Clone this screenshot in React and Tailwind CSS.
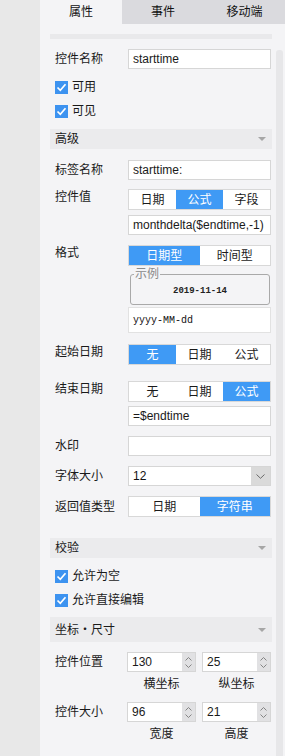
import React from "react";

function Tri() {
  return (
    <svg width="8" height="4" viewBox="0 0 8 4" className="mr-[6px]">
      <polygon points="0,0 8,0 4,4" fill="#a6a6a6" />
    </svg>
  );
}

function Header({ children, tall }) {
  return (
    <div
      className={`flex items-center justify-between pl-[5px] bg-[#ebebed] text-[12px] text-[#1a1a1a] ${
        tall ? "h-[25px]" : "h-[20px]"
      }`}
    >
      <span className="leading-[16px]">{children}</span>
      <Tri />
    </div>
  );
}

function Check({ children }) {
  return (
    <div className="flex items-center h-[24px] pl-[5px]">
      <div className="w-[13px] h-[13px] bg-[#3d93f0] flex items-center justify-center">
        <svg width="11" height="11" viewBox="0 0 11 11">
          <polyline points="1.5,5.5 4.3,8.3 9.5,2.3" fill="none" stroke="#ffffff" strokeWidth="1.7" />
        </svg>
      </div>
      <span className="ml-[4px] text-[12px] leading-[16px] text-[#1a1a1a]">{children}</span>
    </div>
  );
}

function Input({ children, className = "" }) {
  return (
    <div
      className={`w-[143px] h-[20px] bg-white border border-[#d6d6d6] flex items-center pl-[4px] text-[12px] leading-[14px] text-[#1a1a1a] whitespace-nowrap overflow-hidden ${className}`}
    >
      {children}
    </div>
  );
}

function Seg({ items, active }) {
  return (
    <div className="w-[143px] h-[21px] bg-white border border-[#d8d8d8] flex">
      {items.map((t, i) => (
        <div
          key={t}
          className={`flex-1 flex items-center justify-center text-[12px] leading-[14px] ${
            i === active ? "bg-[#3f9af5] text-white" : "text-[#1a1a1a]"
          }`}
        >
          {t}
        </div>
      ))}
    </div>
  );
}

function Row({ label, top, children, className = "" }) {
  return (
    <div className={`flex pl-[5px] ${top ? "items-start" : "items-center"} ${className}`}>
      <div className="w-[73px] shrink-0 text-[12px] leading-[16px] text-[#1a1a1a]">{label}</div>
      {children}
    </div>
  );
}

function Spin({ value }) {
  return (
    <div className="w-[69px] h-[20px] flex bg-white border border-[#d6d6d6]">
      <div className="flex-1 flex items-center pl-[4px] text-[12px] leading-[14px] text-[#1a1a1a]">{value}</div>
      <div className="w-[13px] bg-[#e1e1e3] flex flex-col items-center justify-center gap-[3px]">
        <svg width="7" height="4" viewBox="0 0 7 4">
          <polyline points="0.5,3.5 3.5,0.5 6.5,3.5" fill="none" stroke="#7a7a7a" strokeWidth="0.9" />
        </svg>
        <svg width="7" height="4" viewBox="0 0 7 4">
          <polyline points="0.5,0.5 3.5,3.5 6.5,0.5" fill="none" stroke="#7a7a7a" strokeWidth="0.9" />
        </svg>
      </div>
    </div>
  );
}

function SpinRow({ label, a, b, la, lb }) {
  return (
    <div className="shrink-0">
      <div className="flex items-center pl-[5px]">
        <div className="w-[72px] shrink-0 text-[12px] leading-[16px] text-[#1a1a1a]">{label}</div>
        <div className="flex gap-[6px]">
          <Spin value={a} />
          <Spin value={b} />
        </div>
      </div>
      <div className="flex pl-[77px] h-[24px] items-center">
        <div className="w-[69px] text-center text-[12px] leading-[16px] text-[#1a1a1a]">{la}</div>
        <div className="w-[6px]" />
        <div className="w-[69px] text-center text-[12px] leading-[16px] text-[#1a1a1a]">{lb}</div>
      </div>
    </div>
  );
}

export default function App() {
  return (
    <div className="w-[285px] h-[756px] flex bg-[#e8e8e8] overflow-hidden font-['Liberation_Sans','Noto_Sans_CJK_SC',sans-serif]">
      <div className="w-[40px] shrink-0" />
      <div className="w-[245px] h-[756px] flex flex-col">
        <div className="h-[24px] shrink-0 flex text-[12px] text-[#111]">
          <div className="w-[82px] bg-[#f4f4f6] flex items-center justify-center">属性</div>
          <div className="w-[82px] bg-[#dadade] flex items-center justify-center">事件</div>
          <div className="w-[81px] bg-[#dadade] flex items-center justify-center">移动端</div>
        </div>
        <div className="flex-1 min-h-0 bg-[#f4f4f6] flex overflow-hidden">
          <div className="w-[236px] pl-[10px] pr-[4px] flex flex-col shrink-0 [&>*]:shrink-0">
            <div className="mt-[10px] h-[5px] bg-[#e9e9eb]" />

            <Row label="控件名称" className="mt-[10px]">
              <Input>starttime</Input>
            </Row>

            <div className="mt-[6px]">
              <Check>可用</Check>
              <Check>可见</Check>
            </div>

            <div className="mt-[6px]">
              <Header>高级</Header>
            </div>

            <Row label="标签名称" className="mt-[11px]">
              <Input>starttime:</Input>
            </Row>

            <Row label="控件值" top className="mt-[9px]">
              <Seg items={["日期", "公式", "字段"]} active={1} />
            </Row>
            <div className="flex pl-[78px] mt-[5px]">
              <Input>monthdelta($endtime,-1)</Input>
            </div>

            <Row label="格式" top className="mt-[10px]">
              <Seg items={["日期型", "时间型"]} active={0} />
            </Row>
            <div className="flex pl-[80px] mt-[2px]">
              <fieldset className="w-[140px] border border-[#a9a9a9] rounded-[3px]">
                <legend className="ml-[3px] px-[1px] text-[12px] leading-[12px] text-[#8a8a8a]">示例</legend>
                <div className="h-[24px] flex items-center justify-center text-[9px] font-bold font-['Liberation_Mono',monospace] text-[#222]">
                  2019-11-14
                </div>
              </fieldset>
            </div>
            <div className="flex pl-[78px] mt-[2px]">
              <div className="w-[143px] h-[26px] bg-white border border-[#e2e2e2] flex items-center pl-[4px] text-[10px] font-['Liberation_Mono',monospace] text-[#111]">
                yyyy-MM-dd
              </div>
            </div>

            <Row label="起始日期" top className="mt-[11px]">
              <Seg items={["无", "日期", "公式"]} active={0} />
            </Row>

            <Row label="结束日期" top className="mt-[16px]">
              <Seg items={["无", "日期", "公式"]} active={2} />
            </Row>
            <div className="flex pl-[78px] mt-[4px]">
              <Input>=$endtime</Input>
            </div>

            <Row label="水印" className="mt-[10px]">
              <Input />
            </Row>

            <Row label="字体大小" className="mt-[10px]">
              <div className="w-[143px] h-[20px] bg-white border border-[#d6d6d6] flex">
                <div className="flex-1 flex items-center pl-[4px] text-[12px] leading-[14px] text-[#111]">12</div>
                <div className="w-[19px] bg-[#dadada] flex items-center justify-center">
                  <svg width="9" height="5" viewBox="0 0 9 5">
                    <polyline points="0.5,0.5 4.5,4.3 8.5,0.5" fill="none" stroke="#6a6a6a" strokeWidth="1" />
                  </svg>
                </div>
              </div>
            </Row>

            <Row label="返回值类型" className="mt-[10px]">
              <Seg items={["日期", "字符串"]} active={1} />
            </Row>

            <div className="mt-[21px]">
              <Header>校验</Header>
            </div>
            <div className="mt-[6px]">
              <Check>允许为空</Check>
              <Check>允许直接编辑</Check>
            </div>

            <div className="mt-[5px]">
              <Header tall>坐标・尺寸</Header>
            </div>

            <div className="mt-[10px]">
              <SpinRow label="控件位置" a="130" b="25" la="横坐标" lb="纵坐标" />
            </div>
            <div className="mt-[6px]">
              <SpinRow label="控件大小" a="96" b="21" la="宽度" lb="高度" />
            </div>
          </div>
          <div className="w-[9px] flex">
            <div className="mt-[26px] w-[7px] h-[720px] bg-[#e7e7e9] rounded-[3px]" />
          </div>
        </div>
      </div>
    </div>
  );
}
